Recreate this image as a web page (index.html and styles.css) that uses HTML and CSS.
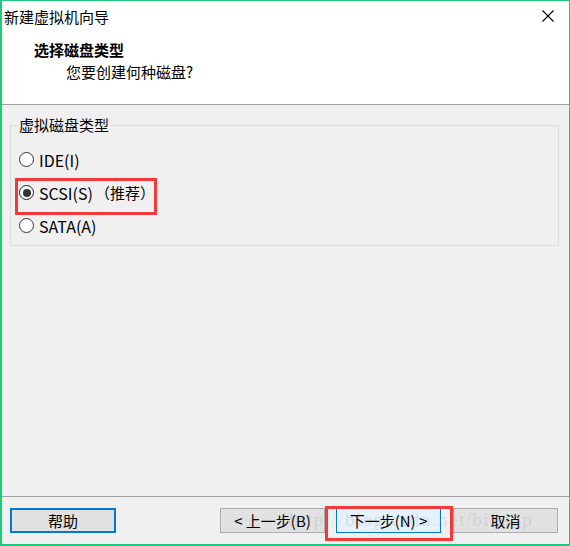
FILE: index.html
```html
<!DOCTYPE html>
<html lang="zh-CN">
<head>
<meta charset="utf-8">
<title>新建虚拟机向导</title>
<link rel="stylesheet" href="styles.css">
</head>
<body>
<div class="window">
  <div class="header">
    <div class="titlebar">
      <span class="title">新建虚拟机向导</span>
      <svg class="close" width="12" height="12" viewBox="0 0 12 12"><path d="M0.5 0.5 L11.5 11.5 M11.5 0.5 L0.5 11.5" stroke="#000" stroke-width="1.1" fill="none"/></svg>
    </div>
    <div class="heading">选择磁盘类型</div>
    <div class="subheading">您要创建何种磁盘?</div>
  </div>
  <div class="body">
    <fieldset class="group">
      <legend>虚拟磁盘类型</legend>
      <div class="row"><span class="radio"></span><span class="label">IDE(I)</span></div>
      <div class="row marked"><span class="radio checked"></span><span class="label">SCSI(S)</span><span class="note">（推荐）</span></div>
      <div class="row"><span class="radio"></span><span class="label">SATA(A)</span></div>
    </fieldset>
  </div>
  <div class="footer">
    <button class="btn help">帮助</button>
    <div class="nav">
      <button class="btn">&lt; 上一步(B)</button>
      <span class="annot"><button class="btn default">下一步(N) &gt;</button></span>
      <button class="btn">取消</button>
    </div>
    <div class="watermark">http://blog.csdn.net/bina_p</div>
  </div>
</div>
</body>
</html>
```
FILE: styles.css
```css
* { box-sizing: border-box; }
html, body { margin: 0; padding: 0; }
body {
  font-family: "Noto Sans CJK SC", "Noto Sans", sans-serif;
  font-size: 15px;
  color: #000;
  background: #fff;
}
.window {
  width: 570px;
  height: 546px;
  border-style: solid;
  border-color: #1fcb7a;
  border-width: 1px 1px 2px 2px;
  display: flex;
  flex-direction: column;
  background: #f0f0f0;
}
.header {
  height: 104px;
  background: #fff;
  border-bottom: 1px solid #a0a0a0;
}
.titlebar {
  height: 32px;
  display: flex;
  align-items: center;
  justify-content: space-between;
  padding: 0 15px 0 2px;
}
.title { line-height: 32px; }
.close { display: block; margin-top: -2px; }
.heading {
  margin-top: 6px;
  line-height: 22px;
  font-weight: bold;
  padding-left: 32px;
}
.subheading {
  line-height: 22px;
  padding-left: 64px;
}
.body {
  flex: 1;
  padding: 10px 10px 0 8px;
}
.group {
  margin: 0;
  border: 1px solid #dcdcdc;
  padding: 8px 8px 3px 8px;
}
.group legend {
  padding: 0 1px;
  margin-left: -1px;
  line-height: 20px;
}
.row {
  position: relative;
  height: 33px;
  display: flex;
  align-items: center;
}
.radio {
  width: 15px;
  height: 15px;
  border: 1px solid #333;
  border-radius: 50%;
  background: #fff;
  display: flex;
  align-items: center;
  justify-content: center;
  margin-right: 5px;
}
.radio.checked { border-color: #222; }
.radio.checked::before {
  content: "";
  width: 8px;
  height: 8px;
  border-radius: 50%;
  background: #333;
}
.label { line-height: 20px; font-size: 16px; }
.note { line-height: 20px; margin-left: 2px; }
.marked::after {
  content: "";
  position: absolute;
  left: -4px;
  top: 2px;
  width: 136px;
  height: 31px;
  border: 3px solid #f23a3a;
}
.footer {
  position: relative;
  height: 48px;
  border-top: 1px solid #a0a0a0;
  display: flex;
  align-items: flex-start;
  padding: 11px 11px 0 8px;
}
.btn {
  width: 105px;
  height: 25px;
  font: inherit;
  font-size: 15px;
  color: #000;
  background: #e1e1e1;
  border: 1px solid #adadad;
  padding: 0;
  line-height: 21px;
}
.btn.help { border: 2px solid #0078d7; width: 106px; }
.btn.default { background: #e5f1fb; border-color: #0078d7; }
.nav {
  margin-left: auto;
  display: flex;
  gap: 11px;
}
.annot { position: relative; display: block; height: 25px; margin-right: 1px; }
.annot .btn { display: block; }
.annot::after {
  content: "";
  position: absolute;
  left: -11px;
  top: -2px;
  right: -12px;
  bottom: -8px;
  border: 3px solid #f23a3a;
}
.watermark {
  position: absolute;
  left: 287px;
  top: 12px;
  font-family: "Liberation Serif", serif;
  font-size: 19px;
  letter-spacing: 1.5px;
  color: rgba(110, 110, 110, 0.16);
  pointer-events: none;
  white-space: nowrap;
}
```
